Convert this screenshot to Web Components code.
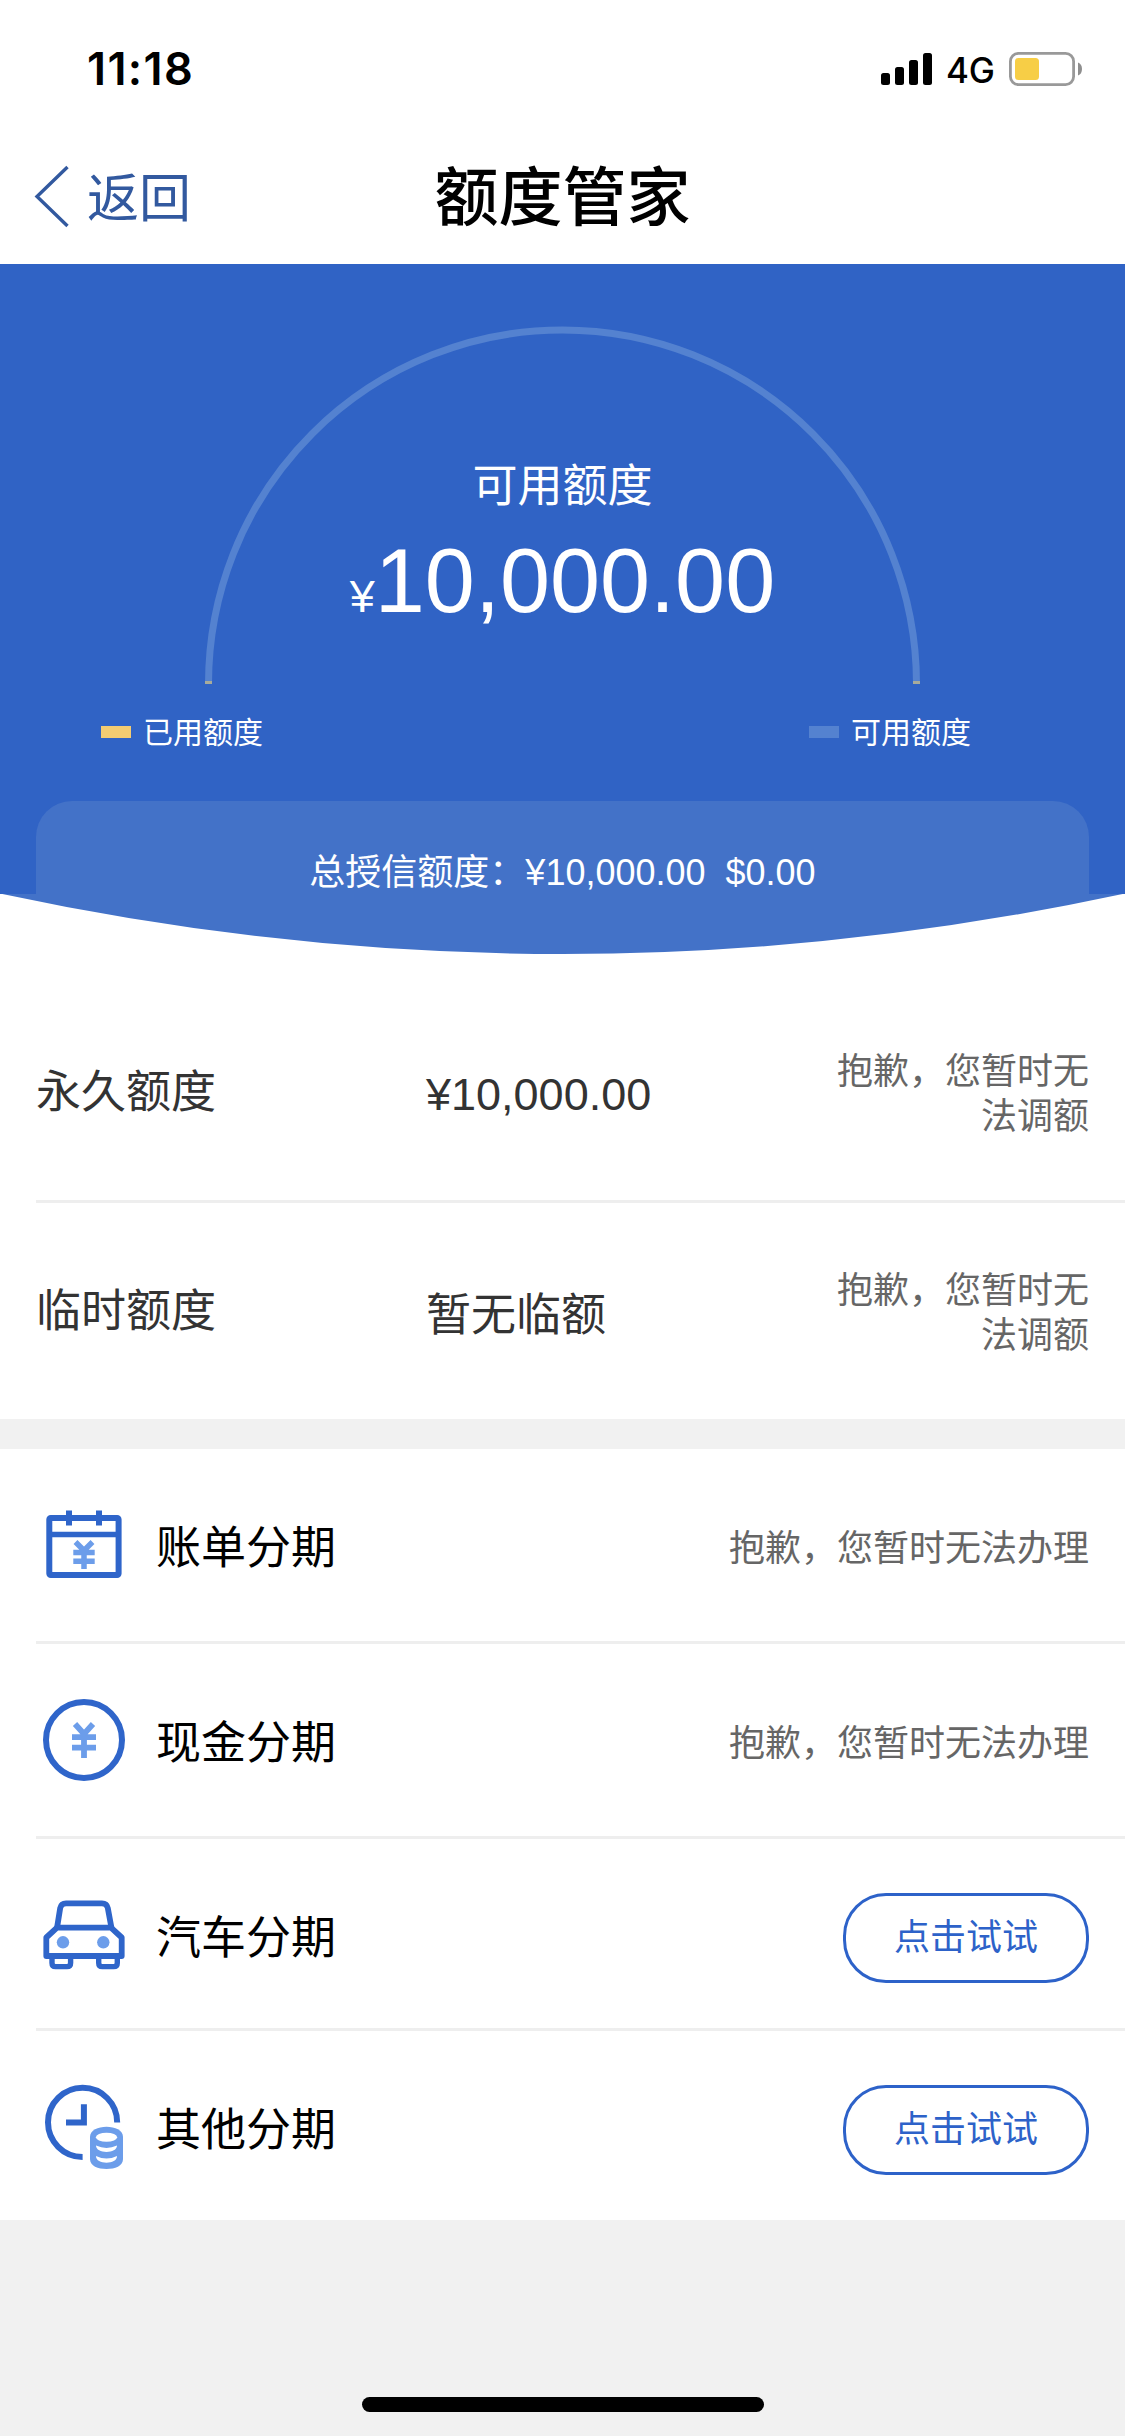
<!DOCTYPE html>
<html lang="zh-CN">
<head>
<meta charset="utf-8">
<title>额度管家</title>
<style>
html,body{margin:0;padding:0}
body{width:1125px;height:2436px;background:#f1f1f1;overflow:hidden;font-family:"Liberation Sans","Noto Sans CJK SC",sans-serif;color:#000}
</style>
</head>
<body>
<quota-app></quota-app>
<script>
const define=(name,html)=>customElements.define(name,class extends HTMLElement{
  constructor(){super();this.attachShadow({mode:'open'}).innerHTML=html;}
});

define('status-bar',`<style>
:host{display:flex;height:132px;box-sizing:border-box;padding:0 43px 0 87px;justify-content:space-between;align-items:flex-start;font-family:Inter,sans-serif}
.time{font-size:45px;font-weight:600;line-height:54px;padding-top:42px;letter-spacing:1.4px}
.right{display:flex;align-items:flex-start;padding-top:48px}
.net{font-size:35px;font-weight:500;line-height:44px;margin-left:13px;width:62px;letter-spacing:-.3px}
svg{display:block}
</style>
<span class="time">11:18</span>
<div class="right">
<svg width="52" height="40" viewBox="882 48 52 40"><rect x="882" y="73" width="9" height="12" rx="2.5"/><rect x="896" y="67" width="9" height="18" rx="2.5"/><rect x="910" y="60" width="9" height="25" rx="2.5"/><rect x="924" y="53" width="9" height="32" rx="2.5"/></svg>
<span class="net">4G</span>
<svg width="74" height="40" viewBox="1008 48 74 40"><rect x="1010.4" y="53.4" width="63.2" height="31.2" rx="8" fill="none" stroke="#999" stroke-width="2.8"/><rect x="1015" y="58" width="24" height="22" rx="3.5" fill="#f7ce46"/><path d="M1078 62.5Q1082 64 1082 69T1078 75.5Z" fill="#8e8e8e"/></svg>
</div>`);

define('nav-bar',`<style>
:host{display:grid;grid-template-columns:1fr auto 1fr;height:132px;padding:0 34px;box-sizing:border-box;align-items:start}
.back{display:flex;color:#32599f;font-size:52px;line-height:60px;padding-top:32px;gap:17px}
.back span{padding-top:5px}
svg{display:block}
h1{margin:0;font-size:64px;line-height:80px;font-weight:500;padding-top:26px}
</style>
<div class="back"><svg width="36" height="64" viewBox="34 164 36 64" fill="none" stroke="#32599f" stroke-width="3.4"><path d="M67.5 167L37 196.500L67.500 226"/></svg><span><slot name="back"></slot></span></div>
<h1><slot></slot></h1>`);

define('quota-gauge',`<style>
:host{display:grid;height:426px;justify-items:center;color:#fff}
svg{grid-area:1/1;display:block}
.text{grid-area:1/1;padding-top:193px;text-align:center}
.label{font-size:45px;line-height:60px}
.amount{font-size:90px;line-height:104px;margin-top:12px;white-space:nowrap}
small{font-size:45px}
</style>
<svg width="1125" height="426" viewBox="0 264 1125 426" fill="none" stroke-width="7"><path d="M208.500 684A354 354 0 0 1 916.500 684" stroke="#5482d0"/><path d="M205 682.500h7M913 682.500h7" stroke="#a7ab9b" stroke-width="3"/></svg>
<div class="text"><div class="label"><slot></slot></div><div class="amount"><small>¥</small><slot name="amount"></slot></div></div>`);

define('legend-item',`<style>
:host{display:flex;align-items:center;gap:12px;color:#fff;font-size:30px;line-height:36px}
i{display:block;width:30px;height:12px;background:var(--swatch)}
span{padding-top:2px}
</style><i></i><span><slot></slot></span>`);

define('quota-hero',`<style>
:host{display:block;height:690px;background:#3063c5}
.legend{display:flex;justify-content:space-between;align-items:flex-start;padding:23px 154px 0 101px;height:111px;box-sizing:border-box}
.card{height:93px;margin:0 36px;background:#4372c8;border-radius:36px 36px 0 0;text-align:center;color:#fff;font-size:36px;line-height:48px;padding-top:48px;box-sizing:border-box}
svg{display:block}
.base{background:#fff}
</style>
<slot name="gauge"></slot>
<div class="legend"><slot name="legend"></slot></div>
<div class="card"><slot></slot></div>
<svg class="base" width="1125" height="60" viewBox="0 0 1125 60"><path d="M0 -.5Q562.500 120.500 1125 -.5Z" fill="#4372c8"/></svg>`);

define('limit-row',`<style>
:host{display:grid;grid-template-columns:390px 1fr 260px;height:219px;box-sizing:border-box;margin-left:36px;padding-right:36px;border-bottom:3px solid #eee;color:#333;font-size:45px;line-height:60px;align-items:start}
:host([last]){border:0;height:216px}
.name{padding-top:79px}.value{padding-top:81px}
:host([last]) .value{padding-top:83px}
.note{font-size:36px;line-height:45px;color:#666;text-align:right;padding-top:65px}
</style>
<div class="name"><slot></slot></div><div class="value"><slot name="value"></slot></div><div class="note"><slot name="note"></slot></div>`);

define('plan-row',`<style>
:host{display:flex;height:var(--h,195px);box-sizing:border-box;margin-left:36px;padding-right:36px;border-bottom:3px solid #eee;align-items:center;font-size:45px}
:host([last]){border:0}
.icon{display:block;width:96px;height:96px;margin-right:24px}
.name{flex:1;line-height:60px;padding-top:8px}
.end{color:#666;font-size:36px;line-height:48px;padding-top:8px}
:host([action]) .name{padding-top:11px}
</style>
<div class="icon"><slot name="icon"></slot></div><div class="name"><slot></slot></div><div class="end"><slot name="end"></slot></div>`);

define('try-button',`<style>
:host{display:block}
button{display:block;width:246px;height:90px;box-sizing:border-box;border:3px solid #2d62c9;border-radius:43px;background:#fff;color:#2d62c9;font:inherit;font-size:36px;line-height:48px;padding:0}
</style><button><slot></slot></button>`);

const icons={
calendar:`<svg viewBox="36 1497 96 96" fill="none" stroke="#2f65ca" stroke-width="6"><rect x="49.300" y="1518" width="69.300" height="57" rx="1.500"/><path d="M49 1534.500H119" stroke-width="5.300"/><path d="M69 1510.500V1525.500M99 1510.500V1525.500"/><path stroke="#6c9dea" d="M75.500 1542L84 1550.500L92.500 1542M73.300 1552.500H94.700M73.300 1561.300H94.700M84 1549V1569" stroke-width="5.500"/></svg>`,
cash:`<svg viewBox="36 1692 96 96" fill="none" stroke="#2f65ca" stroke-width="6"><circle cx="84" cy="1740" r="38"/><path stroke="#6c9dea" d="M75 1724L84 1734L93 1724M72 1737.200H96M72 1747.700H96M84 1733V1758" stroke-width="5.800"/></svg>`,
car:`<svg viewBox="36 1886 96 96" fill="none" stroke="#2f65ca" stroke-width="5.800"><path d="M57 1928L60.200 1908Q61.200 1903.300 66 1903.300H102Q106.800 1903.300 107.800 1908L111.500 1928"/><path d="M57 1927.700H111L121.700 1937.500V1956H46.300V1937.500Z" stroke-linejoin="round"/><path d="M52 1956V1963Q52 1966.600 55.600 1966.600H67Q70.600 1966.600 70.600 1963V1956M98.700 1956V1963Q98.700 1966.600 102.300 1966.600H113.700Q117.300 1966.600 117.300 1963V1956" stroke-width="5.400"/><g fill="#6c9dea" stroke="none"><circle cx="63" cy="1942.300" r="6.200"/><circle cx="103.300" cy="1942.300" r="6.200"/></g></svg>`,
other:`<svg viewBox="36 2078 96 96" fill="none" stroke="#2f65ca" stroke-width="6"><path d="M117.200 2122.500A34.600 34.600 0 1 0 82.600 2157"/><path d="M83.900 2104.300V2122.500H66"/><path d="M90 2137C90 2130 98 2126.700 106.500 2126.700S123 2130 123 2137V2159C123 2166 115 2169 106.500 2169S90 2166 90 2159Z" fill="#6c9dea" stroke="none"/><g fill="#fff" stroke="none"><ellipse cx="106.500" cy="2137.300" rx="10.600" ry="4.500"/><path d="M96 2145.600Q106.500 2150.500 117 2145.600C117 2150 112 2152 106.500 2152S96 2150 96 2145.600ZM96 2156Q106.500 2161 117 2156C117 2160.700 112 2162.700 106.500 2162.700S96 2160.700 96 2156Z"/></g></svg>`};
customElements.define('plan-icon',class extends HTMLElement{
  constructor(){super();this.attachShadow({mode:'open'});}
  connectedCallback(){this.shadowRoot.innerHTML='<style>:host{display:block;width:96px;height:96px}svg{display:block;width:96px;height:96px}</style>'+icons[this.getAttribute('name')];}
});

define('home-indicator',`<style>:host{display:block;width:402px;height:15px;border-radius:8px;background:#000;margin:0 auto 24px 362px}</style>`);

define('quota-app',`<style>
:host{display:flex;flex-direction:column;width:1125px;height:2436px;background:#f1f1f1}
header,.limits,.plans{background:#fff}
.limits{padding-top:30px}
.plans{margin-top:30px}
.space{flex:1}
</style>
<header><status-bar></status-bar><nav-bar><span slot="back">返回</span>额度管家</nav-bar></header>
<quota-hero>
<quota-gauge slot="gauge">可用额度<span slot="amount">10,000.00</span></quota-gauge>
<legend-item slot="legend" style="--swatch:#f3cc72">已用额度</legend-item>
<legend-item slot="legend" style="--swatch:#5482d0">可用额度</legend-item>
<span>总授信额度：¥10,000.00&nbsp;&nbsp;$0.00</span>
</quota-hero>
<div class="limits">
<limit-row>永久额度<span slot="value">¥10,000.00</span><span slot="note">抱歉，您暂时无法调额</span></limit-row>
<limit-row last>临时额度<span slot="value">暂无临额</span><span slot="note">抱歉，您暂时无法调额</span></limit-row>
</div>
<div class="plans">
<plan-row><plan-icon slot="icon" name="calendar"></plan-icon>账单分期<span slot="end">抱歉，您暂时无法办理</span></plan-row>
<plan-row><plan-icon slot="icon" name="cash"></plan-icon>现金分期<span slot="end">抱歉，您暂时无法办理</span></plan-row>
<plan-row action style="--h:192px"><plan-icon slot="icon" name="car"></plan-icon>汽车分期<try-button slot="end">点击试试</try-button></plan-row>
<plan-row action last style="--h:189px"><plan-icon slot="icon" name="other"></plan-icon>其他分期<try-button slot="end">点击试试</try-button></plan-row>
</div>
<div class="space"></div>
<home-indicator></home-indicator>`);
</script>
</body>
</html>
